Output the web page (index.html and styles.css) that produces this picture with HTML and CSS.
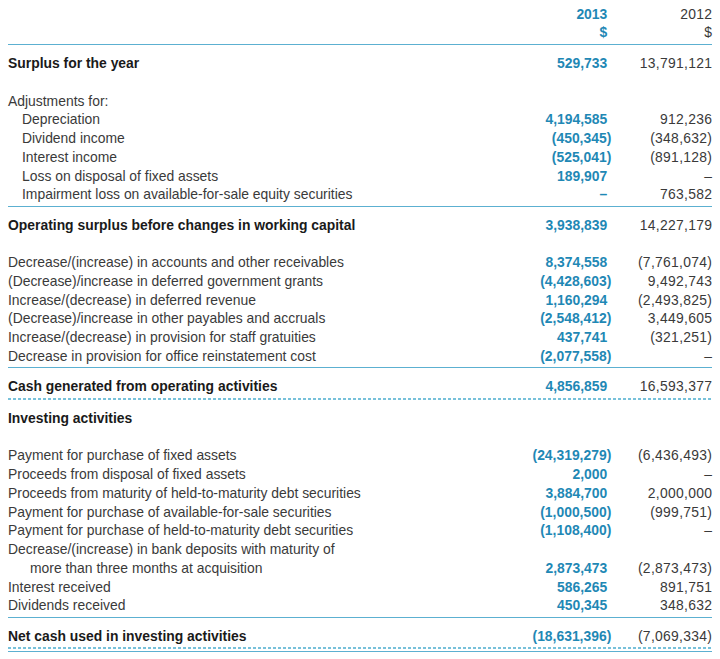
FILE: index.html
```html
<!DOCTYPE html>
<html>
<head>
<meta charset="utf-8">
<link rel="stylesheet" href="styles.css">
</head>
<body>
<div class="sheet">
  <div class="head">
    <div class="row hrow"><span class="lab"></span><span class="c13">2013</span><span class="c12">2012</span></div>
    <div class="row hrow"><span class="lab"></span><span class="c13">$</span><span class="c12">$</span></div>
  </div>

  <div class="sec solid">
    <div class="row b"><span class="lab">Surplus for the year</span><span class="c13">529,733</span><span class="c12">13,791,121</span></div>
    <div class="row gap"></div>
    <div class="row"><span class="lab">Adjustments for:</span><span class="c13"></span><span class="c12"></span></div>
    <div class="row"><span class="lab in1">Depreciation</span><span class="c13">4,194,585</span><span class="c12">912,236</span></div>
    <div class="row"><span class="lab in1">Dividend income</span><span class="c13">(450,345<span class="cp">)</span></span><span class="c12">(348,632)</span></div>
    <div class="row"><span class="lab in1">Interest income</span><span class="c13">(525,041<span class="cp">)</span></span><span class="c12">(891,128)</span></div>
    <div class="row"><span class="lab in1">Loss on disposal of fixed assets</span><span class="c13">189,907</span><span class="c12">–</span></div>
    <div class="row"><span class="lab in1">Impairment loss on available-for-sale equity securities</span><span class="c13">–</span><span class="c12">763,582</span></div>
  </div>

  <div class="sec solid">
    <div class="row b"><span class="lab">Operating surplus before changes in working capital</span><span class="c13">3,938,839</span><span class="c12">14,227,179</span></div>
    <div class="row gap"></div>
    <div class="row"><span class="lab">Decrease/(increase) in accounts and other receivables</span><span class="c13">8,374,558</span><span class="c12">(7,761,074)</span></div>
    <div class="row"><span class="lab">(Decrease)/increase in deferred government grants</span><span class="c13">(4,428,603<span class="cp">)</span></span><span class="c12">9,492,743</span></div>
    <div class="row"><span class="lab">Increase/(decrease) in deferred revenue</span><span class="c13">1,160,294</span><span class="c12">(2,493,825)</span></div>
    <div class="row"><span class="lab">(Decrease)/increase in other payables and accruals</span><span class="c13">(2,548,412<span class="cp">)</span></span><span class="c12">3,449,605</span></div>
    <div class="row"><span class="lab">Increase/(decrease) in provision for staff gratuities</span><span class="c13">437,741</span><span class="c12">(321,251)</span></div>
    <div class="row"><span class="lab">Decrease in provision for office reinstatement cost</span><span class="c13">(2,077,558<span class="cp">)</span></span><span class="c12">–</span></div>
  </div>

  <div class="sec dash">
    <div class="row b"><span class="lab">Cash generated from operating activities</span><span class="c13">4,856,859</span><span class="c12">16,593,377</span></div>
  </div>

  <div class="sec solid">
    <div class="row b"><span class="lab">Investing activities</span><span class="c13"></span><span class="c12"></span></div>
    <div class="row gap"></div>
    <div class="row"><span class="lab">Payment for purchase of fixed assets</span><span class="c13">(24,319,279<span class="cp">)</span></span><span class="c12">(6,436,493)</span></div>
    <div class="row"><span class="lab">Proceeds from disposal of fixed assets</span><span class="c13">2,000</span><span class="c12">–</span></div>
    <div class="row"><span class="lab">Proceeds from maturity of held-to-maturity debt securities</span><span class="c13">3,884,700</span><span class="c12">2,000,000</span></div>
    <div class="row"><span class="lab">Payment for purchase of available-for-sale securities</span><span class="c13">(1,000,500<span class="cp">)</span></span><span class="c12">(999,751)</span></div>
    <div class="row"><span class="lab">Payment for purchase of held-to-maturity debt securities</span><span class="c13">(1,108,400<span class="cp">)</span></span><span class="c12">–</span></div>
    <div class="row"><span class="lab">Decrease/(increase) in bank deposits with maturity of</span><span class="c13"></span><span class="c12"></span></div>
    <div class="row"><span class="lab in2">more than three months at acquisition</span><span class="c13">2,873,473</span><span class="c12">(2,873,473)</span></div>
    <div class="row"><span class="lab">Interest received</span><span class="c13">586,265</span><span class="c12">891,751</span></div>
    <div class="row"><span class="lab">Dividends received</span><span class="c13">450,345</span><span class="c12">348,632</span></div>
  </div>

  <div class="sec last">
    <div class="row b"><span class="lab">Net cash used in investing activities</span><span class="c13">(18,631,396<span class="cp">)</span></span><span class="c12">(7,069,334)</span></div>
    <div class="rule-dash"></div>
    <div class="rule-solid"></div>
  </div>
</div>
</body>
</html>
```

FILE: styles.css
```css
html, body {
  margin: 0;
  padding: 0;
  background: #ffffff;
}

body {
  font-family: "Liberation Sans", Arial, Helvetica, sans-serif;
  font-size: 13.9px;
  color: #3a3a3a;
}

.sheet {
  width: 704px;
  margin: 0 8px;
  padding-top: 5px;
}

.row {
  display: flex;
  line-height: 18.75px;
  height: 18.75px;
  white-space: nowrap;
}

.lab {
  flex: 1;
}

.c13 {
  width: 150px;
  text-align: right;
  color: #1f88b5;
  font-weight: bold;
}

.c12 {
  width: 105px;
  text-align: right;
  letter-spacing: 0.3px;
  margin-right: -0.3px;
}

.cp {
  margin-right: -4px;
}

.b .lab {
  font-weight: bold;
  color: #1a1a1a;
}

.in1 {
  padding-left: 14px;
}

.in2 {
  padding-left: 22px;
}

.head {
  padding-bottom: 3px;
  border-bottom: 1.5px solid #5cb0d1;
}

.hrow {
  line-height: 18px;
  height: 18px;
}

.sec {
  padding-top: 9px;
}

.solid {
  padding-bottom: 1.5px;
  border-bottom: 1.5px solid #5cb0d1;
}

.dash {
  padding-bottom: 2.5px;
}

.dash::after {
  content: "";
  display: block;
  height: 1.5px;
  background: repeating-linear-gradient(90deg, #78c1da 0 3px, transparent 3px 5px);
  position: relative;
  top: 2.5px;
}

.rule-dash {
  margin-top: 2px;
  height: 1.5px;
  background: repeating-linear-gradient(90deg, #78c1da 0 3px, transparent 3px 5px);
}

.rule-solid {
  margin-top: 2px;
  height: 1.5px;
  background: #5cb0d1;
}
```
